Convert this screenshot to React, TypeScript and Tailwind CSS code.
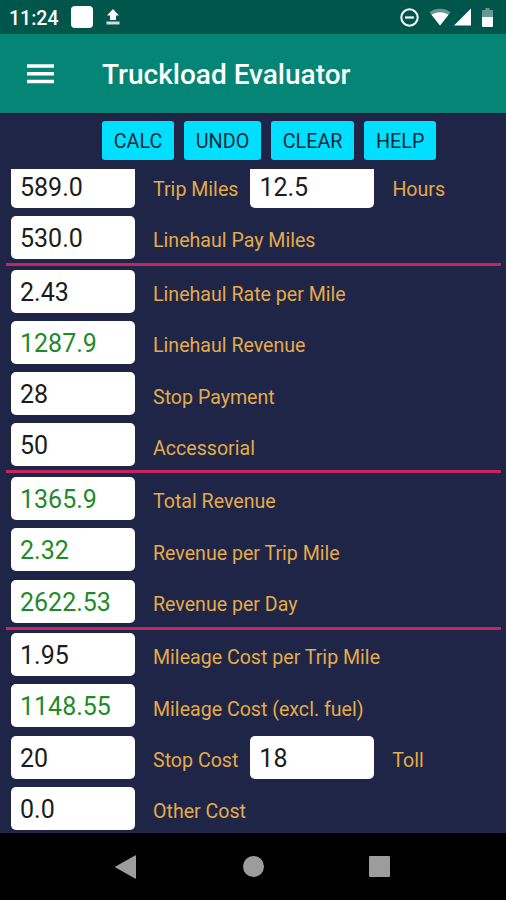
import React from "react";

interface Field {
  value: string;
  label: string;
  computed?: boolean;
  extra?: { value: string; label: string };
}

const sections: Field[][] = [
  [
    { value: "589.0", label: "Trip Miles", extra: { value: "12.5", label: "Hours" } },
    { value: "530.0", label: "Linehaul Pay Miles" },
  ],
  [
    { value: "2.43", label: "Linehaul Rate per Mile" },
    { value: "1287.9", label: "Linehaul Revenue", computed: true },
    { value: "28", label: "Stop Payment" },
    { value: "50", label: "Accessorial" },
  ],
  [
    { value: "1365.9", label: "Total Revenue", computed: true },
    { value: "2.32", label: "Revenue per Trip Mile", computed: true },
    { value: "2622.53", label: "Revenue per Day", computed: true },
  ],
  [
    { value: "1.95", label: "Mileage Cost per Trip Mile" },
    { value: "1148.55", label: "Mileage Cost (excl. fuel)", computed: true },
    { value: "20", label: "Stop Cost", extra: { value: "18", label: "Toll" } },
    { value: "0.0", label: "Other Cost" },
  ],
];

const actions = ["CALC", "UNDO", "CLEAR", "HELP"];

const StatusBar: React.FC = () => (
  <div className="flex h-[34px] shrink-0 items-center bg-[#00564a] pl-[9px] pr-[13px] text-white">
    <span className="w-[50px] whitespace-nowrap pt-[3px] text-[19.5px] font-medium leading-none">11:24</span>
    <span className="ml-[12px] size-[22px] rounded-[4px] bg-white" />
    <svg className="ml-[13px] h-[16px] w-[14px]" viewBox="0 0 14 16" fill="currentColor">
      <path d="M7 0 13 6.500H10V11H4V6.500H1z" />
      <path d="M.5 12.500h13v3H.5z" opacity=".8" />
    </svg>
    <svg className="ml-auto size-[19px]" viewBox="0 0 19 19" fill="none" stroke="currentColor">
      <circle cx="9.5" cy="9.5" r="8.2" strokeWidth="2" />
      <path d="M5 9.500h9" strokeWidth="2.2" />
    </svg>
    <svg className="ml-[10px] h-[18px] w-[22px]" viewBox="0 0 22 18" fill="currentColor">
      <path d="M.5 4.200C6.500-.3 15.500-.3 21.500 4.200L11 17.500z" opacity=".4" />
      <path d="M2.500 6.800C7.500 3.400 14.500 3.400 19.500 6.800L11 17.500z" />
    </svg>
    <svg className="ml-[3px] h-[18px] w-[17px]" viewBox="0 0 17 18" fill="currentColor">
      <path d="M17 .5v17H0z" />
    </svg>
    <svg className="ml-[11px] h-[19px] w-[11px]" viewBox="0 0 11 19" fill="currentColor">
      <path d="M3.500 0h4v2H10q1 0 1 1v6H0V3q0-1 1-1h2.500z" opacity=".4" />
      <path d="M0 9h11v9q0 1-1 1H1q-1 0-1-1z" />
    </svg>
  </div>
);

const Box: React.FC<{ value: string; computed?: boolean }> = ({ value, computed }) => (
  <input
    defaultValue={value}
    className={
      "h-[43px] w-[124px] shrink-0 rounded-[5px] bg-white pl-[9px] pt-[2px] text-[25px] outline-none " +
      (computed ? "text-[#1f8a2a]" : "text-[#1c1c1c]")
    }
  />
);

const FieldRow: React.FC<{ field: Field }> = ({ field }) => (
  <div className="flex h-[43px] items-center whitespace-nowrap text-[19.6px] text-[#e3ab49]">
    <Box value={field.value} computed={field.computed} />
    <span className="ml-[18px] pt-[7px]">{field.label}</span>
    {field.extra && (
      <>
        <span className="w-[12px]" />
        <Box value={field.extra.value} />
        <span className="ml-[18px] pt-[7px]">{field.extra.label}</span>
      </>
    )}
  </div>
);

const App: React.FC = () => {
  return (
    <div className="flex h-[900px] w-[506px] flex-col overflow-hidden bg-[#1f2547] font-[Roboto,sans-serif]">
      <StatusBar />

      <header className="flex h-[79px] shrink-0 items-center bg-[#048576] pl-[27px] text-white">
        <svg className="h-[20px] w-[27px]" viewBox="0 0 27 20" fill="currentColor">
          <path d="M0 .2h27v3.500H0zM0 8h27v3.500H0zM0 15.800h27v3.500H0z" />
        </svg>
        <h1 className="ml-[48px] pt-[3px] text-[28px] font-medium">Truckload Evaluator</h1>
      </header>

      <div className="flex h-[56px] shrink-0 gap-[10px] border-t border-[#141736] pl-[102px] pt-[7px]">
        {actions.map((name) => (
          <button
            key={name}
            className="h-[39px] rounded-[3px] bg-[#00dfff] px-[11.700px] pt-[2px] text-[19.8px] text-[#0b2a38]"
          >
            {name}
          </button>
        ))}
      </div>

      {/* the list is scrolled a few pixels under the buttons */}
      <main className="flex h-[664px] shrink-0 flex-col overflow-hidden">
        <div className="-mt-[4px] flex flex-col">
          {sections.map((fields, i) => (
            <section key={i}>
              {i > 0 && <hr className="ml-[6px] mr-[5px] mb-[3.700px] mt-[4px] h-[3px] border-0 bg-[#c4245f]" />}
              <div className="flex flex-col gap-[8.200px] pl-[11px]">
                {fields.map((field) => (
                  <FieldRow key={field.label} field={field} />
                ))}
              </div>
            </section>
          ))}
        </div>
      </main>

      <nav className="flex h-[67px] shrink-0 items-center bg-black pl-[115px] text-[#9c9c9c]">
        <svg className="h-[24px] w-[21px]" viewBox="0 0 21 24" fill="currentColor">
          <path d="M20 .5Q21 0 21 1v22q0 1-1 .5L.5 12.500Q0 12 .5 11.500z" />
        </svg>
        <span className="ml-[107px] size-[21px] rounded-full bg-[#9c9c9c]" />
        <span className="ml-[105px] size-[21px] rounded-[1px] bg-[#9c9c9c]" />
      </nav>
    </div>
  );
};

export default App;
